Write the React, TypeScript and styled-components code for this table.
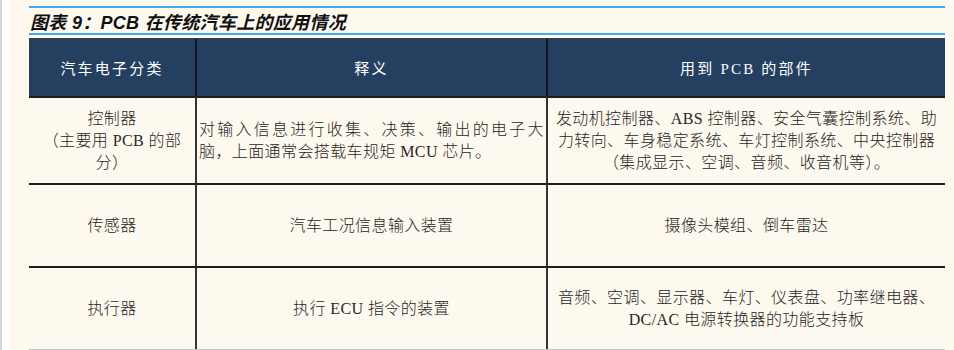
import React from 'react';
import styled, { createGlobalStyle } from 'styled-components';

const GlobalStyle = createGlobalStyle`
  html, body {
    margin: 0;
    padding: 0;
    background: #fef9ef;
  }
`;

const Page = styled.div`
  display: flex;
  flex-direction: row;
  width: 954px;
  height: 350px;
  overflow: hidden;
  background: #fef9ef;
`;

const Gutter = styled.div`
  width: 7px;
  flex-shrink: 0;
  background: #ffffff;
  border-left: 2px solid #d4d4d4;
`;

const Content = styled.div`
  flex-grow: 1;
  padding: 6px 9px 0 20px;
  display: flex;
  flex-direction: column;
`;

const TitleBar = styled.div`
  height: 25px;
  border-top: 2px solid #41ade6;
  border-bottom: 2px solid #41ade6;
  margin-bottom: 3px;
  display: flex;
  align-items: center;
  padding-left: 1px;
  font-family: "Liberation Sans", "Noto Sans CJK SC", sans-serif;
  font-size: 18px;
  font-weight: bold;
  font-style: italic;
  letter-spacing: 0.3px;
  color: #111;
  white-space: nowrap;
`;

const Table = styled.div`
  display: grid;
  grid-template-columns: 166px 351px 399px;
  grid-template-rows: 57px 87px 83px 83px;
  border-top: 1px solid #3a3a3a;
  border-bottom: 1px solid #c8c8c8;
  font-family: "Liberation Serif", "Noto Sans CJK SC", serif;
`;

const HeadCell = styled.div<{ $first?: boolean }>`
  background: #243f5f;
  color: #ffffff;
  display: flex;
  align-items: center;
  justify-content: center;
  font-size: 15px;
  letter-spacing: 2.2px;
  border-left: ${(p) => (p.$first ? 'none' : '2px solid #0e1520')};
`;

const Cell = styled.div<{ $first?: boolean; $align?: 'left' | 'center' }>`
  display: flex;
  flex-direction: column;
  justify-content: center;
  align-items: stretch;
  text-align: ${(p) => p.$align || 'center'};
  border-top: 2px solid #1e1e1e;
  border-left: ${(p) => (p.$first ? 'none' : '2px solid #333')};
  padding: 0 2px;
  color: #262626;
  font-size: 16px;
  font-weight: 300;
  letter-spacing: 0.4px;
  line-height: 22px;
`;

const Line = styled.span`
  display: block;
  white-space: nowrap;
`;

const JustifiedLine = styled.span`
  display: block;
  white-space: nowrap;
  text-align: justify;
  text-align-last: justify;
`;

export default function App(): React.ReactElement {
  return (
    <>
      <GlobalStyle />
      <Page>
        <Gutter />
        <Content>
          <TitleBar>图表 9：PCB 在传统汽车上的应用情况</TitleBar>
          <Table>
            <HeadCell $first>汽车电子分类</HeadCell>
            <HeadCell>释义</HeadCell>
            <HeadCell>用到 PCB 的部件</HeadCell>

            <Cell $first>
              <Line>控制器</Line>
              <Line>（主要用 PCB 的部</Line>
              <Line>分）</Line>
            </Cell>
            <Cell $align="left">
              <JustifiedLine>对输入信息进行收集、决策、输出的电子大</JustifiedLine>
              <Line>脑，上面通常会搭载车规矩 MCU 芯片。</Line>
            </Cell>
            <Cell>
              <Line>发动机控制器、ABS 控制器、安全气囊控制系统、助</Line>
              <Line>力转向、车身稳定系统、车灯控制系统、中央控制器</Line>
              <Line>（集成显示、空调、音频、收音机等）。</Line>
            </Cell>

            <Cell $first>
              <Line>传感器</Line>
            </Cell>
            <Cell>
              <Line>汽车工况信息输入装置</Line>
            </Cell>
            <Cell>
              <Line>摄像头模组、倒车雷达</Line>
            </Cell>

            <Cell $first>
              <Line>执行器</Line>
            </Cell>
            <Cell>
              <Line>执行 ECU 指令的装置</Line>
            </Cell>
            <Cell>
              <Line>音频、空调、显示器、车灯、仪表盘、功率继电器、</Line>
              <Line>DC/AC 电源转换器的功能支持板</Line>
            </Cell>
          </Table>
        </Content>
      </Page>
    </>
  );
}
